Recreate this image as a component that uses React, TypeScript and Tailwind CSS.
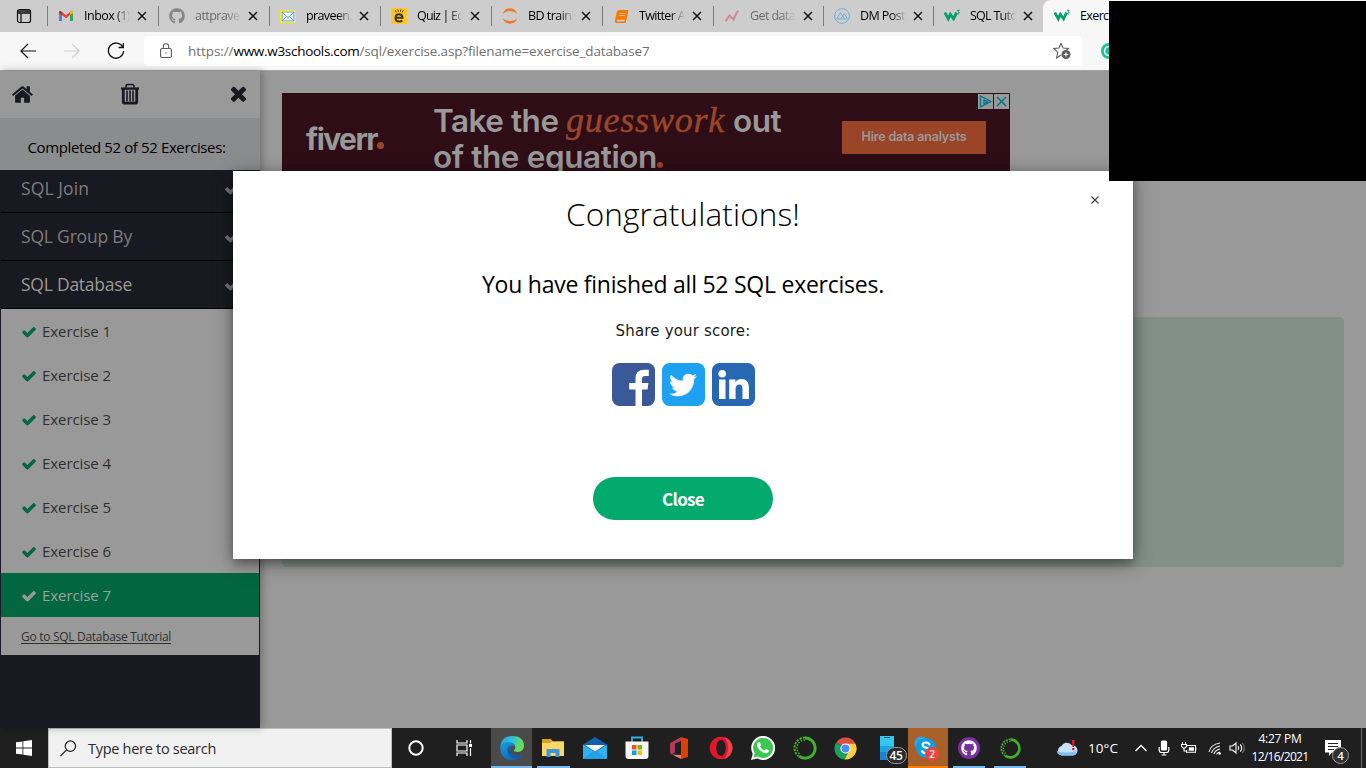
import { useLayoutEffect, useRef, useState, type ReactNode } from "react";
import { FaGithub, FaTwitter, FaBook } from "react-icons/fa";

/* Single line of text whose tracking is tuned so that it fills a given width. */
function Fit({ w, className = "", children }: { w: number; className?: string; children: string }) {
  const ref = useRef<HTMLSpanElement>(null);
  const [ls, setLs] = useState(0);
  useLayoutEffect(() => {
    const el = ref.current;
    if (!el) return;
    setLs((w - el.getBoundingClientRect().width) / children.length);
  }, [w, children]);
  return (
    <span ref={ref} className={`inline-block shrink-0 whitespace-pre ${className}`} style={{ letterSpacing: ls }}>
      {children}
    </span>
  );
}

const CHECK =
  "M1671 566q0 40-28 68l-724 724-136 136q-28 28-68 28t-68-28l-136-136-362-362q-28-28-28-68t28-68l136-136q28-28 68-28t68 28l294 295 656-657q28-28 68-28t68 28l136 136q28 28 28 68z";
const TIMES =
  "M1490 1322q0 40-28 68l-136 136q-28 28-68 28t-68-28l-294-294-294 294q-28 28-68 28t-68-28l-136-136q-28-28-28-68t28-68l294-294-294-294q-28-28-28-68t28-68l136-136q28-28 68-28t68 28l294 294 294-294q28-28 68-28t68 28l136 136q28 28 28 68t-28 68l-294 294 294 294q28 28 28 68z";
const HOME =
  "M1472 992v480q0 26-19 45t-45 19h-384v-384h-256v384h-384q-26 0-45-19t-19-45v-480q0-1 .5-3t.5-3l575-474 575 474q1 2 1 6zm223-69l-62 74q-8 9-21 11h-3q-13 0-21-7l-692-577-692 577q-12 8-24 7-13-2-21-11l-62-74q-8-10-7-23.5t11-21.5l719-599q32-26 76-26t76 26l244 204v-195q0-14 9-23t23-9h192q14 0 23 9t9 23v408l219 182q10 8 11 21.5t-7 23.5z";

function Awesome({ d, className }: { d: string; className: string }) {
  return (
    <svg viewBox="0 0 1792 1792" className={`shrink-0 ${className}`} fill="currentColor">
      <path d={d} />
    </svg>
  );
}

function Trash() {
  return (
    <svg viewBox="0 0 20 22" className="mb-0.5 mr-0.5 h-[22px] w-5 shrink-0" fill="none" stroke="currentColor">
      <path d="M1 5.6h18" strokeWidth="2.4" />
      <path d="M6 4.8V3.200Q6 1.400 8 1.400h4q2 0 2 1.800v1.600" strokeWidth="1.500" />
      <path d="M3.300 6v12.700q0 1.500 1.700 1.500h10q1.700 0 1.700-1.500V6" strokeWidth="2.800" />
      <path d="M7 7.500v11M10 7.500v11M13 7.500v11" strokeWidth="1.600" />
    </svg>
  );
}

function W3() {
  return (
    <svg viewBox="0 0 16 16" className="size-4 shrink-0" fill="none" stroke="#04a06a">
      <path d="M.8 4.600 4.300 10.800 6.300 6.200 9.600 10.800 12.600 4.600" strokeWidth="2.800" strokeLinejoin="miter" />
      <path d="M13 2.300h2.200l-1.200 1.500q1.500.2 1.200 1.400-.5 1-2.200.5" strokeWidth="1" />
    </svg>
  );
}

const gmail = (
  <svg viewBox="0 0 16 16" className="size-4">
    <path d="M1 4v9h3V7z" fill="#4285f4" />
    <path d="M15 4v9h-3V7z" fill="#34a853" />
    <path d="M1 3.500 2.800 3 8 7.200 13.200 3l1.800.8L12 7 8 10.300 4 7.200z" fill="#ea4335" />
    <path d="M12 4.200 13.800 3q1.200.2 1.200 2L12 7.300z" fill="#fbbc04" />
    <path d="M4 4.200 2.200 3Q1 3.300 1 5l3 2.300z" fill="#c5221f" />
  </svg>
);
const envelope = (
  <svg viewBox="0 0 16 16" className="size-4">
    <rect x=".5" y="2.500" width="15" height="12" fill="#f4faff" stroke="#f8f000" />
    <path d="M2 4h12v9H2zM2 4l6 5.500L14 4M2 13l4.500-4.500M14 13 9.500 8.500" fill="#d9eafa" stroke="#6f94b8" strokeWidth=".9" />
  </svg>
);
const edyoda = (
  <span className="flex size-4 items-center justify-center bg-[#fdc526]">
    <svg viewBox="0 0 16 16" className="size-4" fill="none" stroke="#3c3524">
      <path d="M4.500 9.800h7q0-3.600-3.500-3.600T4.500 10q0 3.500 3.800 3.500 2 0 3-1" strokeWidth="2" />
      <path d="M4.300 2.300l1 2M7 1.500l.4 2.200M9.400 3.700l.4-2.200M11.300 4.300l1-2" strokeWidth="1" />
    </svg>
  </span>
);
const jupyter = (
  <svg viewBox="0 0 16 16" className="size-4" fill="#f37726">
    <path d="M.8 5.500Q3 .3 8 .3t7.200 5.200Q12 3 8 3T.8 5.500zM.8 10.500Q3 15.700 8 15.700t7.200-5.200Q12 13 8 13T.8 10.500z" />
  </svg>
);
const chart = (
  <svg viewBox="0 0 16 16" className="size-4" fill="none" stroke="#d48a96" strokeWidth="2">
    <path d="M1.500 13.500 5.500 7.500l4 4L14 2.500" />
  </svg>
);
const peaks = (
  <svg viewBox="0 0 16 16" className="size-4" fill="none" stroke="#74b3d8" strokeWidth="1">
    <circle cx="8" cy="8" r="7.400" />
    <path d="M2.500 11h11L10.300 5.500 8.800 8 6.500 4.800zM6.500 11l2.300-3 2 3" />
  </svg>
);

const TABS: { icon: ReactNode; label: string; w: number; tone?: string; width: string }[] = [
  { icon: gmail, label: "Inbox (1)", w: 46, width: "w-[111px]" },
  { icon: <FaGithub className="size-4 text-[#868686]" />, label: "attpravee", w: 51, tone: "text-[#6c6c6c]", width: "w-[111px]" },
  { icon: envelope, label: "praveen.", w: 46, width: "w-[111px]" },
  { icon: edyoda, label: "Quiz | Ed", w: 47, width: "w-[111px]" },
  { icon: jupyter, label: "BD traini", w: 46, width: "w-[111px]" },
  { icon: <FaBook className="size-[13px] -skew-x-12 text-[#f57c00]" />, label: "Twitter A", w: 46, width: "w-[111px]" },
  { icon: chart, label: "Get data", w: 45, tone: "text-[#6c6c6c]", width: "w-[110px]" },
  { icon: peaks, label: "DM Post", w: 45, width: "w-[110px]" },
  { icon: <W3 />, label: "SQL Tuto", w: 47, width: "w-[110px]" },
];

function TabStrip() {
  return (
    <div className="flex h-8 bg-[#cdcdcd]">
      <div className="flex w-[47px] items-center justify-center">
        <svg viewBox="0 0 16 16" className="size-4" fill="none" stroke="#111" strokeWidth="1.200">
          <rect x="1.500" y="1.500" width="13" height="13" rx="2" />
          <path d="M1.500 3h13M5 5v9.500M1.500 5h13" strokeWidth="1.300" />
        </svg>
      </div>
      {TABS.map((t) => (
        <div key={t.label} className={`flex shrink-0 items-center ${t.width}`}>
          <div className="h-5 w-px bg-[#7d7d7d]" />
          <div className="ml-2.5 flex w-4 justify-center">{t.icon}</div>
          <div className={`ml-2.5 w-[46px] overflow-hidden text-[12.500px] leading-4 [mask-image:linear-gradient(90deg,#000_68%,transparent)] ${t.tone ?? "text-black"}`}>
            <Fit w={t.w}>{t.label}</Fit>
          </div>
          <svg viewBox="0 0 10 10" className="ml-[7px] size-2.5" stroke="#111" strokeWidth="1.500">
            <path d="M1 1l8 8M9 1l-8 8" />
          </svg>
        </div>
      ))}
      <div className="flex grow items-center rounded-tl-lg bg-[#f7f7f7] pl-[11px]">
        <W3 />
        <span className="ml-2.5 text-[12.500px]"><Fit w={31}>Exerci</Fit></span>
      </div>
    </div>
  );
}

function Toolbar() {
  return (
    <div className="flex h-[39px] items-center border-b border-[#a3a3a3] bg-[#f7f7f7]">
      <svg viewBox="0 0 16 16" className="ml-5 size-4" fill="none" stroke="#111" strokeWidth="1.200">
        <path d="M16 8H.8M8 1 .8 8 8 15" />
      </svg>
      <svg viewBox="0 0 16 16" className="ml-7 size-4" fill="none" stroke="#cfcfcf" strokeWidth="1.200">
        <path d="M0 8h15.200M8 1l7.200 7L8 15" />
      </svg>
      <svg viewBox="0 0 18 18" className="ml-[27px] size-[18px]" fill="none" stroke="#111" strokeWidth="1.300">
        <path d="M15.700 5A7.600 7.600 0 1 0 16.600 9M16.300 1v4.500h-4.700" />
      </svg>
      <div className="ml-[19px] flex h-[30px] w-[938px] items-center rounded bg-white pl-4">
        <svg viewBox="0 0 12 16" className="h-4 w-3" fill="none" stroke="#5c5c5c" strokeWidth="1.100">
          <rect x=".6" y="5.500" width="10.800" height="9" rx="1.500" />
          <path d="M3.300 5.500V3.500a2.700 2.700 0 0 1 5.400 0v2" />
          <circle cx="6" cy="10" r=".7" fill="#5c5c5c" stroke="none" />
        </svg>
        <div className="ml-4 flex text-[13.500px] leading-5 text-[#707070]">
          <Fit w={45.500}>https://</Fit>
          <Fit w={126} className="text-black">www.w3schools.com</Fit>
          <Fit w={290}>/sql/exercise.asp?filename=exercise_database7</Fit>
        </div>
        <svg viewBox="0 0 18 18" className="ml-[403px] size-[18px]" fill="none" stroke="#5c5c5c" strokeWidth="1.100">
          <path d="M8 1.200 10 6l5.500.4-3.800 3.200M8 13l-4.400 3 1.200-5.600L.8 6.400 6 6l2-4.800" />
          <circle cx="13" cy="12.500" r="4.500" fill="#5c5c5c" stroke="none" />
          <path d="M13 10.200v4.600M10.700 12.500h4.600" stroke="#fff" />
        </svg>
      </div>
      <svg viewBox="0 0 16 16" className="ml-[19px] size-4">
        <circle cx="8" cy="8" r="8" fill="#15c39a" />
        <circle cx="8" cy="8" r="4.500" fill="none" stroke="#fff" strokeWidth="1.500" />
      </svg>
    </div>
  );
}

function Section({ label, w, bright, className }: { label: string; w: number; bright?: boolean; className: string }) {
  return (
    <div className={`ml-px flex shrink-0 justify-between border-b border-black bg-[#191921] pl-5 pr-5 ${className}`}>
      <span className={`text-[17.500px] leading-6 ${bright ? "text-[#999990]" : "text-[#7d7d7b]"}`}>
        <Fit w={w}>{label}</Fit>
      </span>
      <Awesome d={CHECK} className="mt-[5px] size-4 text-[#77777a]" />
    </div>
  );
}

function Sidebar() {
  return (
    <aside className="z-10 flex w-[260px] shrink-0 flex-col bg-[#191921] shadow-[2px_0_8px_rgba(0,0,0,0.28)]">
      <div className="flex h-[47px] shrink-0 items-center justify-between bg-[#999] pl-[11px] pr-2.5 text-[#191921]">
        <Awesome d={HOME} className="mb-px size-[23px]" />
        <Trash />
        <Awesome d={TIMES} className="mb-0.5 size-[23px]" />
      </div>
      <div className="flex h-[52px] shrink-0 items-center justify-center bg-[#8a8c8d] pr-[7px] pt-1.5 text-[15px] text-black">
        <Fit w={198}>Completed 52 of 52 Exercises:</Fit>
      </div>
      <Section label="SQL Join" w={68} className="h-[43px] pt-1.5" />
      <Section label="SQL Group By" w={111} className="h-12 pt-[11px]" />
      <Section label="SQL Database" w={111} bright className="h-12 pt-[11px]" />
      <ul className="mx-px bg-[#999] text-[#303030]">
        {[1, 2, 3, 4, 5, 6, 7].map((n) => (
          <li key={n} className={`flex h-11 items-center pl-5 text-[15px] ${n === 7 ? "bg-[#026641] text-[#9aa39c]" : ""}`}>
            <Awesome d={CHECK} className={`mt-px size-4 ${n === 7 ? "text-[#999]" : "text-[#026641]"}`} />
            <span className="ml-[5px]"><Fit w={69}>{`Exercise ${n}`}</Fit></span>
          </li>
        ))}
        <li className="flex h-[38px] items-center pl-5 pt-0.5 text-[12px] underline underline-offset-2">
          <Fit w={150}>Go to SQL Database Tutorial</Fit>
        </li>
      </ul>
    </aside>
  );
}

function Ad() {
  return (
    <div className="flex h-[90px] w-[728px] bg-[#2e0d17] font-['Inter','Liberation_Sans',sans-serif] text-[#999]">
      <div className="ml-6 flex w-[127px] pt-[26px]">
        <Fit w={71} className="text-[30px] font-bold leading-10">fiverr</Fit>
        <span className="mt-[23px] size-[7px] rounded-full bg-[#9c4629]" />
      </div>
      <div className="w-[409px] pt-2.5 text-[31.500px] font-semibold leading-9">
        <div className="flex h-9 items-baseline">
          <Fit w={133}>{"Take the "}</Fit>
          <Fit w={159} className="font-['Liberation_Serif',serif] text-[36px] font-normal italic leading-8 text-[#9c4629] [-webkit-text-stroke:0.4px_#9c4629]">guesswork</Fit>
          <Fit w={48} className="ml-2">out</Fit>
        </div>
        <div className="flex h-9 items-baseline">
          <Fit w={224}>of the equation</Fit>
          <span className="size-1.5 rounded-full bg-[#9c4629]" />
        </div>
      </div>
      <div className="mt-7 flex h-[33px] w-[144px] items-center justify-center rounded-[1px] bg-[#9a4528] text-[12.500px] font-semibold">
        <Fit w={105}>Hire data analysts</Fit>
      </div>
      <div className="-ml-2 mt-px flex h-[15px] gap-px">
        <svg viewBox="0 0 15 15" className="size-[15px] bg-[#999]" fill="none" stroke="#00778a" strokeWidth="1.300">
          <path d="M2.500 2v11L13 7.500zM6 6v4l3.500-2.300z" />
        </svg>
        <svg viewBox="0 0 15 15" className="size-[15px] bg-[#999]" stroke="#00778a" strokeWidth="1.500">
          <path d="M3 3l9 9M12 3l-9 9" />
        </svg>
      </div>
    </div>
  );
}

function Dialog() {
  return (
    <div className="absolute left-[233px] top-[171px] z-20 flex h-[388px] w-[900px] flex-col items-center bg-white text-black shadow-[0_4px_10px_rgba(0,0,0,0.32),0_4px_20px_rgba(0,0,0,0.3)]">
      <svg viewBox="0 0 8 8" className="absolute left-[858px] top-[25px] size-2" stroke="#444" strokeWidth="1.200">
        <path d="M.5.5l7 7M7.500.5l-7 7" />
      </svg>
      <h1 className="mt-[23px] h-10 text-[31.500px] font-[350] leading-10"><Fit w={234}>Congratulations!</Fit></h1>
      <h2 className="mt-[34px] h-8 text-[23px] font-[370] leading-8"><Fit w={402}>You have finished all 52 SQL exercises.</Fit></h2>
      <p className="mt-[19px] h-6 font-['DejaVu_Sans',sans-serif] text-[15px] leading-6 text-[#1a1a1a]"><Fit w={135}>Share your score:</Fit></p>
      <div className="mt-5 flex gap-[7px]">
        <svg viewBox="0 0 43 43" className="size-[43px]">
          <rect width="43" height="43" rx="7.500" fill="#3b5998" />
          <path d="M23.500 43V26.500h-6.300V20h6.300v-4.500q0-8.800 8.500-8.800h4.800v6.200h-3.600q-3.200 0-3.200 3V20h6.400l-.9 6.500H30V43z" fill="#fff" />
        </svg>
        <span className="flex size-[43px] items-center justify-center rounded-[7.500px] bg-[#1da1f2] text-white">
          <FaTwitter className="size-7" />
        </span>
        <svg viewBox="0 0 43 43" className="size-[43px]" fill="#fff">
          <rect width="43" height="43" rx="7.500" fill="#2867b2" />
          <circle cx="10.200" cy="10.800" r="3.800" />
          <path d="M7 16.500h6.500V36H7zM17.200 16.500h6.200v2.700q1.800-3.200 6.300-3.200 7.200 0 7.200 8.500V36h-6.400V26q0-4.600-3.200-4.600-3.700 0-3.700 4.600v10h-6.400z" />
        </svg>
      </div>
      <button className="mt-[71px] flex h-[43px] w-[180px] items-center justify-center rounded-full bg-[#04aa6d] font-['Noto_Sans_CJK_SC',sans-serif] text-[17px] font-bold text-white">
        <Fit w={42}>Close</Fit>
      </button>
    </div>
  );
}

function Ring({ className }: { className: string }) {
  return (
    <svg viewBox="0 0 24 24" className={className} fill="none" stroke="#43b02a">
      <path d="M12 1.900A10.100 10.100 0 1 1 6 20.100" strokeWidth="3" />
      <path d="M12 1.500A10.500 10.500 0 0 0 5.500 20.200" strokeWidth="2" strokeDasharray="2.200 1.200" />
      <path d="M12 4A8 8 0 0 0 7 18.300" strokeWidth="1.600" strokeDasharray="1.400 1.500" />
    </svg>
  );
}

const edge = (
  <svg viewBox="0 0 24 24" className="size-6">
    <defs>
      <linearGradient id="eg" x1="0" y1="0" x2="1" y2=".3">
        <stop offset="0" stopColor="#2498df" />
        <stop offset=".5" stopColor="#33c0d8" />
        <stop offset="1" stopColor="#6cdf54" />
      </linearGradient>
      <linearGradient id="eb" x1="0" y1="0" x2="1" y2="1">
        <stop offset="0" stopColor="#1b9de2" />
        <stop offset="1" stopColor="#0c59a4" />
      </linearGradient>
    </defs>
    <path d="M.2 11Q1 0 12 0q11.500 0 12 9.500 0 6.500-6.500 6.500-4 0-3.500-1.800 1.600-1.700 1.300-3.500Q14.500 7 9 7 3 7 .2 11z" fill="url(#eg)" />
    <path d="M.2 11Q2 6 8.500 6q6.500.3 6.800 4.700Q13.500 9 11 10.500 8 13 10 16.500q3 5 12.500 2Q18 25 10 24 0 22 .2 11z" fill="url(#eb)" />
    <path d="M7.500 14Q7 10 11 9.500q-3.500 4 .5 8 4 3.500 11 .500-2.500 4.500-6.500 4.500Q8 22 7.500 14z" fill="#135ba5" />
  </svg>
);
const explorer = (
  <svg viewBox="0 0 22 20" className="h-5 w-[22px]">
    <path d="M0 1h9l2 2.500h11V17H0z" fill="#d9a01c" />
    <path d="M0 5h8l2-1.500h12V18H0z" fill="#fcd667" />
    <path d="M4.500 19v-8h13v8h-4v-4h-5v4z" fill="#3f96dc" />
  </svg>
);
const mail = (
  <svg viewBox="0 0 24 22" className="h-[22px] w-6">
    <path d="M0 7.500 12 0l12 7.500L12 15z" fill="#0f5faf" />
    <path d="M0 7.500 12 15l12-7.500V22H0z" fill="#2cb4f0" />
    <path d="M0 22 12 13l12 9z" fill="#1b8edb" opacity=".5" />
    <path d="M2 8h20L12 14.500z" fill="#f5f5f5" />
  </svg>
);
const store = (
  <svg viewBox="0 0 24 24" className="size-6">
    <path d="M7 7V1.500h10V7" fill="none" stroke="#2fb0e6" strokeWidth="1.800" />
    <path d="M.5 5.500h23V20q0 3-3 3h-17q-3 0-3-3z" fill="#f5f5f5" />
    <path d="M7 9h4.500v4.500H7z" fill="#f25022" />
    <path d="M12.500 9H17v4.500h-4.500z" fill="#7fba00" />
    <path d="M7 14.500h4.500V19H7z" fill="#00a4ef" />
    <path d="M12.500 14.500H17V19h-4.500z" fill="#ffb900" />
  </svg>
);
const office = (
  <svg viewBox="0 0 18 22" className="h-[22px] w-[18px]">
    <path d="M0 6 11 0v4L5 6.500v9L1.500 17.500 0 16z" fill="#b23a57" />
    <path d="M2 17.500 11 18v4z" fill="#e07c70" />
    <path d="M11 0l7 2v18l-7 2z" fill="#e03e08" />
  </svg>
);
const opera = (
  <svg viewBox="0 0 24 24" className="size-6">
    <circle cx="12" cy="12" r="11.300" fill="#e3152b" />
    <path d="M15 1a11.300 11.300 0 0 1 0 22q4-4 4-11T15 1z" fill="#f2525c" opacity=".7" />
    <ellipse cx="12" cy="12" rx="4.800" ry="8.300" fill="#1f1f1f" />
  </svg>
);
const whatsapp = (
  <svg viewBox="0 0 24 24" className="size-6">
    <path d="M0 24l1.700-6.200A12 12 0 1 1 6.300 22.400z" fill="#fff" />
    <path d="M2.500 21.500l1.200-4.200A10 10 0 1 1 7 20.500z" fill="#3ec653" />
    <path d="M7 6.500q1-1.200 2 0l1 2.300q0 .8-1 1.700 1.500 2.800 4.500 4 1.300-1.800 2-1.500l2.300 1.200q.4 1-.7 2.300-2 1.500-5 0Q8 14.500 6.500 11 5.500 8.500 7 6.500z" fill="#fff" />
  </svg>
);
const chrome = (
  <svg viewBox="0 0 24 24" className="size-[23px]">
    <path d="M12 12 2.500 5.700A11.500 11.500 0 0 1 22.500 7z" fill="#dd4f43" />
    <path d="M12 12 2.300 5.800A11.500 11.500 0 0 0 11 23.500l5.500-9z" fill="#1ba15f" />
    <path d="M12 7h10.400A11.500 11.500 0 0 1 11 23.500L17 12z" fill="#ffcd41" />
    <circle cx="12" cy="12" r="5.300" fill="#fff" />
    <circle cx="12" cy="12" r="4.200" fill="#4b8cf5" />
  </svg>
);
const phone = (
  <span className="relative flex h-6 w-[14px]">
    <svg viewBox="0 0 14 24" className="h-6 w-[14px]">
      <path d="M0 0h14v24H0z" fill="#1685d8" />
      <path d="M0 0h14v10H0z" fill="#35c5f0" />
      <path d="M0 10h14v6H0z" fill="#1da4e2" />
      <path d="M4 1.500h6" stroke="#156" strokeWidth="1" />
    </svg>
    <span className="absolute left-[6px] top-[11px] flex h-[17px] w-[21px] items-center justify-center rounded-full border border-[#9a9a9a] bg-[#2a2d30] text-[12px] font-semibold tracking-[-0.3px] text-white">
      45
    </span>
  </span>
);
const skype = (
  <span className="relative flex size-6 items-center justify-center">
    <svg viewBox="0 0 24 24" className="size-6 shrink-0">
      <circle cx="7.500" cy="7.500" r="7" fill="#28a8ea" />
      <circle cx="16.500" cy="16.500" r="7" fill="#0078d4" />
      <circle cx="12" cy="12" r="10" fill="#0d9fe6" />
      <path d="M15.300 8.300Q14.300 6.500 12 6.500q-3.300 0-3.300 2.500 0 1.900 3.100 2.600 3.700.8 3.700 3 0 2.700-3.600 2.700-2.800 0-3.800-2.100" fill="none" stroke="#fff" strokeWidth="2.200" strokeLinecap="round" />
    </svg>
    <span className="absolute left-[11px] top-[11px] flex size-[14px] items-center justify-center rounded-full bg-[#f04040] text-[10px] font-semibold text-white">2</span>
  </span>
);
const githubDesktop = (
  <span className="flex size-[22px] items-center justify-center rounded-full bg-[#7a2fa0]">
    <FaGithub className="size-4 text-white" />
  </span>
);

const APPS: { id: string; node: ReactNode; cell: string; line?: string }[] = [
  { id: "edge", node: edge, cell: "w-[41px] bg-[#4a4a4a]", line: "w-full bg-[#76b9ed]" },
  { id: "files", node: explorer, cell: "w-[42px]", line: "w-[33px] bg-[#76b9ed]" },
  { id: "mail", node: mail, cell: "w-[42px]" },
  { id: "store", node: store, cell: "w-[42px]" },
  { id: "office", node: office, cell: "w-[42px]" },
  { id: "opera", node: opera, cell: "w-[42px]" },
  { id: "whatsapp", node: whatsapp, cell: "w-[42px]" },
  { id: "ring", node: <Ring className="size-6" />, cell: "w-[42px]" },
  { id: "chrome", node: chrome, cell: "w-[39px]" },
  { id: "phone", node: phone, cell: "w-[43px]" },
  { id: "skype", node: skype, cell: "w-[40px] bg-[#a86029] pr-1", line: "w-[40px] bg-[#ff7a00]" },
  { id: "github", node: githubDesktop, cell: "w-[42px]", line: "w-8 bg-[#76b9ed]" },
  { id: "ring2", node: <Ring className="size-[21px]" />, cell: "w-[40px]", line: "w-8 bg-[#76b9ed]" },
];

function Taskbar() {
  return (
    <footer className="flex h-10 shrink-0 bg-[#1f1f1f] text-white">
      <div className="flex w-12 items-center justify-center">
        <svg viewBox="0 0 16 16" className="size-4" fill="#fff">
          <path d="M0 2.300 6.500 1.400v6.200H0zM7.300 1.300 16 0v7.600H7.300zM0 8.400h6.500v6.200L0 13.700zM7.300 8.400H16V16l-8.700-1.300z" />
        </svg>
      </div>
      <div className="flex w-[344px] items-center border border-[#bdbdbd] bg-[#f1f1f1] pl-[11px]">
        <svg viewBox="0 0 18 18" className="size-[17px]" fill="none" stroke="#222" strokeWidth="1.300">
          <circle cx="11" cy="6.500" r="5.500" />
          <path d="M7 10.500.5 17" />
        </svg>
        <span className="ml-[11px] pt-px text-[14.500px] text-[#2b2b2b]"><Fit w={128}>Type here to search</Fit></span>
      </div>
      <div className="flex w-12 items-center justify-center">
        <svg viewBox="0 0 16 16" className="size-4" fill="none" stroke="#fff" strokeWidth="2">
          <circle cx="8" cy="8" r="6.700" />
        </svg>
      </div>
      <div className="mr-[3px] flex w-12 items-center justify-center">
        <svg viewBox="0 0 17 16" className="h-4 w-[17px]" fill="none" stroke="#fff" strokeWidth="1.200">
          <path d="M1 0v3h10V0M1 16v-3h10v3M1 5h10v6H1zM14.500 0v3.500M14.500 8v8" />
          <path d="M13 4h3v3h-3z" fill="#fff" stroke="none" />
        </svg>
      </div>
      {APPS.map((a) => (
        <div key={a.id} className={`flex shrink-0 flex-col items-center ${a.cell}`}>
          <div className="flex h-[38px] items-center pt-0.5">{a.node}</div>
          {a.line && <div className={`h-0.5 shrink-0 ${a.id === "skype" ? "mr-[-4px]" : ""} ${a.line}`} />}
        </div>
      ))}
      <div className="ml-[26px] flex items-center">
        <svg viewBox="0 0 22 18" className="h-[18px] w-[22px]">
          <path d="M5.500 16.500a5 5 0 0 1 0-9.500A6 6 0 0 1 16 6.500a5 5 0 0 1 1 10z" fill="#c5e3fa" />
          <path d="M5.500 16.500Q1 15.500.7 12q8 3 20 0-.7 4-4 4.500z" fill="#82bdf0" />
          <path d="M15.800 1h3l-.7 7h-1.600z" fill="#e3182d" />
          <circle cx="17.300" cy="10" r="1.300" fill="#e3182d" />
        </svg>
        <span className="ml-2.5 pt-px text-[13.500px]"><Fit w={30}>10°C</Fit></span>
        <svg viewBox="0 0 12 8" className="ml-[17px] h-2 w-3" fill="none" stroke="#fff" strokeWidth="1.300">
          <path d="M.5 7 6 1.500 11.500 7" />
        </svg>
        <svg viewBox="0 0 12 16" className="ml-[11px] h-4 w-3" fill="none" stroke="#fff" strokeWidth="1.200">
          <rect x="3.500" y="1" width="5" height="9" rx="1" fill="#fff" />
          <path d="M1.200 7v3q0 2.500 2.500 2.500h4.600q2.500 0 2.500-2.500V7M6 12.500V15M3.500 15h5" />
        </svg>
        <svg viewBox="0 0 16 12" className="ml-[11px] h-3 w-4" fill="none" stroke="#fff" strokeWidth="1.100">
          <path d="M6 3.500h8.500v6.800H5.500V8M14.800 5.500v3" />
          <path d="M8 5.200h5v3.600H7.500z" fill="#fff" stroke="none" />
          <path d="M1.500 0v2.500M4.500 0v2.500M.5 2.500h5v2L4 6H2L.5 4.500zM3 6v3h2.500" />
        </svg>
        <svg viewBox="0 0 14 14" className="ml-[11px] size-[14px]" fill="none" stroke="#eee" strokeWidth="1.100">
          <path d="M1 11Q2.500 3.500 12 2M3.500 12Q5 6.500 12 5M6 13Q7 9.200 12 8M8.700 13.500Q9 11.500 12 11" />
          <circle cx="11.700" cy="12.500" r="1.200" fill="#fff" stroke="none" />
        </svg>
        <svg viewBox="0 0 17 14" className="ml-[7px] h-[14px] w-[17px]" fill="none" stroke="#fff" strokeWidth="1.100">
          <path d="M1 5h2.500L7 2v10L3.500 9H1zM9 5q1.500 2 0 4M11.200 3.300q3 3.700 0 7.400" />
          <path d="M13.400 2q4 5 0 10" stroke="#777" />
        </svg>
      </div>
      <div className="ml-[5px] flex w-[58px] flex-col items-center pt-0.5 text-[12px] leading-[18px]">
        <Fit w={43}>4:27 PM</Fit>
        <Fit w={57}>12/16/2021</Fit>
      </div>
      <div className="relative ml-4 mt-3 flex h-4 w-4">
        <svg viewBox="0 0 17 17" className="size-[17px] shrink-0">
          <path d="M0 0h16v12.500H7L4 16v-3.500H0z" fill="#fff" />
          <path d="M3 3.500h10M3 6.500h10M3 9.500h6" stroke="#222" />
        </svg>
        <span className="absolute left-[7px] top-[7px] flex size-[17px] items-center justify-center rounded-full border border-[#9a9a9a] bg-[#303030] text-[11.500px] font-semibold">4</span>
      </div>
      <div className="ml-[20px] w-px bg-[#6a6a6a]" />
    </footer>
  );
}

export default function App() {
  return (
    <div className="relative flex h-[768px] w-[1366px] flex-col overflow-hidden bg-[#999] font-['Open_Sans','Noto_Sans',sans-serif]">
      <TabStrip />
      <Toolbar />
      <div className="flex min-h-0 grow">
        <Sidebar />
        <main className="grow pl-[22px] pt-[22px]">
          <Ad />
          <div className="mt-[134px] h-[250px] w-[1062px] rounded bg-[#829088]" />
        </main>
      </div>
      <Taskbar />
      <Dialog />
      <div className="absolute left-[1109px] top-px z-30 h-[180px] w-[257px] bg-black" />
    </div>
  );
}
